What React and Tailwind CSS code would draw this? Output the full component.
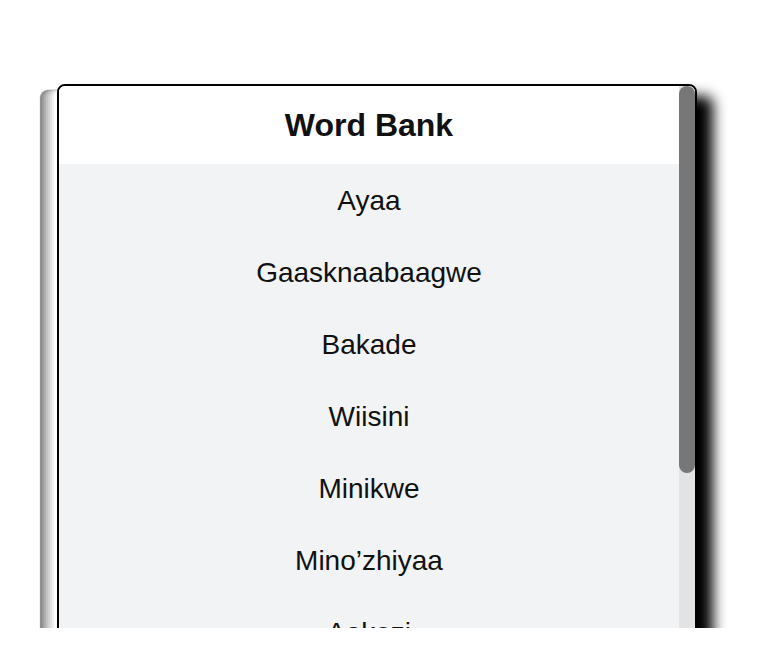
import React from 'react';

const words = [
  'Ayaa',
  'Gaasknaabaagwe',
  'Bakade',
  'Wiisini',
  'Minikwe',
  'Mino’zhiyaa',
  'Aakozi',
  'Nibaa',
  'Giizhigad',
  'Ishkode',
  'Nibi',
  'Miigwech',
];

const WordBank = () => {
  return (
    <div className="w-[640px] h-[608px] border-2 border-black rounded-lg bg-white overflow-hidden flex shadow-[16px_12px_14px_#000,-3px_6px_1px_#fff,-5px_6px_1px_#f0f0f0,-7px_6px_1px_#e2e2e2,-9px_6px_1px_#d2d2d2,-11px_6px_1px_#c2c2c2,-13px_6px_1px_#b0b0b0,-15px_6px_1px_#9c9c9c,-17px_6px_1px_#888]">
      <div className="flex-1 overflow-hidden">
        <div className="h-[78px] flex items-center justify-center bg-white">
          <h2 className="text-[32px] font-bold text-[#111]">Word Bank</h2>
        </div>
        <ul className="bg-[#f2f3f5]">
          {words.map((w) => (
            <li key={w} className="h-[72px] pt-[2px] flex items-center justify-center text-[28px] text-[#111]">
              {w}
            </li>
          ))}
        </ul>
      </div>
      {/* scrollbar */}
      <div className="w-4 shrink-0 bg-[#e3e3e3]">
        <div className="h-[387px] rounded-full bg-[#777]"></div>
      </div>
    </div>
  );
};

export default function App() {
  return (
    <div className="h-[628px] overflow-hidden bg-white pt-[84px] pl-[57px] font-['Liberation_Sans',Arial,sans-serif]">
      <WordBank />
    </div>
  );
}
